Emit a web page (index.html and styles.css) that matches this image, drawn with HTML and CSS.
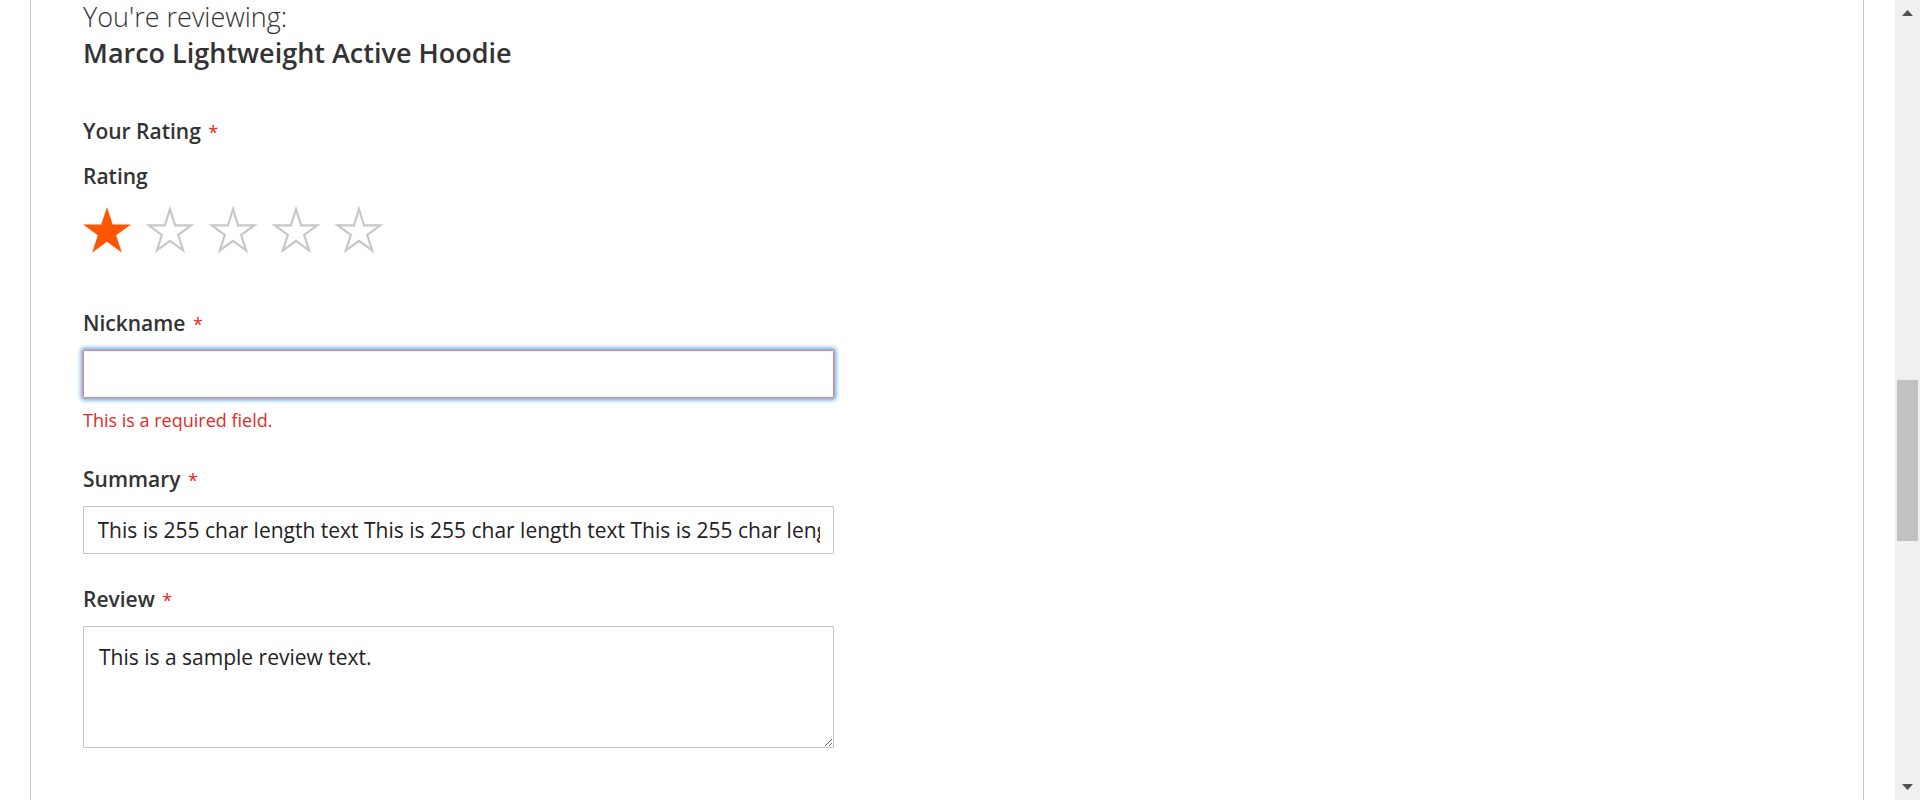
FILE: index.html
```html
<!DOCTYPE html>
<html lang="en">
<head>
<meta charset="utf-8">
<title>Review form</title>
<link rel="stylesheet" href="styles.css">
</head>
<body>
<div class="viewport">
  <main class="page">
    <div class="frame">
      <form class="review-form">
        <div class="legend">
          <span class="legend-intro">You're reviewing:</span>
          <strong class="legend-product">Marco Lightweight Active Hoodie</strong>
        </div>

        <div class="field field-rating">
          <div class="label required">Your Rating</div>
          <div class="label rating-label">Rating</div>
          <div class="stars">
            <svg class="star" viewBox="0 0 48 46" width="48" height="46"><polygon class="star-on" points="24,0 29.66,17.41 47.97,17.41 33.16,28.18 38.81,45.59 24,34.83 9.19,45.59 14.84,28.18 0.03,17.41 18.34,17.41"/></svg>
            <svg class="star" viewBox="0 0 48 46" width="48" height="46"><polygon class="star-off" points="24,2.2 29.1,18.4 45.2,18.4 32.2,27.9 37.1,43.4 24,33.8 10.9,43.4 15.8,27.9 2.8,18.4 18.9,18.4"/></svg>
            <svg class="star" viewBox="0 0 48 46" width="48" height="46"><polygon class="star-off" points="24,2.2 29.1,18.4 45.2,18.4 32.2,27.9 37.1,43.4 24,33.8 10.9,43.4 15.8,27.9 2.8,18.4 18.9,18.4"/></svg>
            <svg class="star" viewBox="0 0 48 46" width="48" height="46"><polygon class="star-off" points="24,2.2 29.1,18.4 45.2,18.4 32.2,27.9 37.1,43.4 24,33.8 10.9,43.4 15.8,27.9 2.8,18.4 18.9,18.4"/></svg>
            <svg class="star" viewBox="0 0 48 46" width="48" height="46"><polygon class="star-off" points="24,2.2 29.1,18.4 45.2,18.4 32.2,27.9 37.1,43.4 24,33.8 10.9,43.4 15.8,27.9 2.8,18.4 18.9,18.4"/></svg>
          </div>
        </div>

        <div class="field field-nickname">
          <label class="label required" for="nickname">Nickname</label>
          <input class="input input-error" id="nickname" type="text" value="">
          <div class="error-msg">This is a required field.</div>
        </div>

        <div class="field field-summary">
          <label class="label required" for="summary">Summary</label>
          <input class="input" id="summary" type="text" value="This is 255 char length text This is 255 char length text This is 255 char length text This is 255 char length text This is 255 char length text This is 255 char length text This is 255 char length text This is 255 char length text This is 255 ch">
        </div>

        <div class="field field-review">
          <label class="label required" for="review">Review</label>
          <textarea class="textarea" id="review">This is a sample review text.</textarea>
        </div>
      </form>
    </div>
  </main>
  <div class="scrollbar">
    <div class="sb-btn sb-up"><svg width="11" height="6" viewBox="0 0 11 6"><polygon points="0,6 5.5,0 11,6" fill="#505050"/></svg></div>
    <div class="sb-track"><div class="sb-thumb"></div></div>
    <div class="sb-btn sb-down"><svg width="11" height="6" viewBox="0 0 11 6"><polygon points="0,0 5.5,6 11,0" fill="#505050"/></svg></div>
  </div>
</div>
</body>
</html>
```

FILE: styles.css
```css
html, body {
  margin: 0;
  padding: 0;
  background: #fff;
}

body {
  font-family: "Open Sans", "Liberation Sans", sans-serif;
  color: #333;
}

.viewport {
  display: flex;
  height: 800px;
  overflow: hidden;
}

.page {
  flex: 1;
  min-width: 0;
  padding-left: 30px;
  padding-right: 31px;
}

.frame {
  height: 100%;
  border-left: 1px solid #c8c8c8;
  border-right: 1px solid #c8c8c8;
  padding-left: 52px;
}

.review-form {
  display: flex;
  flex-direction: column;
  padding-top: 1px;
}

.legend {
  display: flex;
  flex-direction: column;
  font-size: 27px;
  line-height: 32px;
  color: #333;
}

.legend-intro {
  font-weight: 300;
  margin-bottom: 4px;
}

.legend-product {
  font-weight: 600;
}

.field {
  display: flex;
  flex-direction: column;
  align-items: flex-start;
}

.label {
  display: block;
  font-size: 21px;
  line-height: 30px;
  font-weight: 600;
  color: #333;
  margin-bottom: 11.3px;
}

.label.required::after {
  content: "*";
  color: #e02b27;
  font-size: 18px;
  margin-left: 7.5px;
  font-weight: 400;
}

.field-rating {
  margin-top: 46.8px;
}

.field-rating .required {
  margin-bottom: 14.5px;
}

.rating-label {
  margin-bottom: 15.3px;
}

.stars {
  display: flex;
  gap: 15px;
}

.star {
  display: block;
  overflow: visible;
}

.star-on {
  fill: #ff5501;
}

.star-off {
  fill: none;
  stroke: #c7c7c7;
  stroke-width: 2.2;
  stroke-linejoin: miter;
}

.field-nickname {
  margin-top: 55.5px;
}

.field-nickname .label {
  margin-bottom: 10.7px;
}

.field-summary {
  margin-top: 30.4px;
}

.field-review {
  margin-top: 29.8px;
}

.input {
  display: block;
  box-sizing: border-box;
  width: 751px;
  height: 48px;
  margin: 0;
  padding: 0 13.5px;
  border: 1px solid #c2c2c2;
  border-radius: 1px;
  font-family: "Open Sans", "Liberation Sans", sans-serif;
  font-size: 21px;
  color: #222;
  background: #fff;
  outline: none;
}

.input-error {
  border-color: #ed8380;
  box-shadow: 0 0 4px 2px #62a0d6;
}

.error-msg {
  margin-top: 10px;
  font-size: 18px;
  line-height: 25.7px;
  color: #e02b27;
}

.textarea {
  display: block;
  box-sizing: border-box;
  width: 751px;
  height: 121.5px;
  margin: 0;
  padding: 15px 15px;
  border: 1px solid #c2c2c2;
  border-radius: 1px;
  font-family: "Open Sans", "Liberation Sans", sans-serif;
  font-size: 21px;
  line-height: 30px;
  color: #222;
  background: #fff;
  resize: vertical;
  outline: none;
}

.scrollbar {
  width: 25px;
  flex: none;
  background: #f0f0f0;
  display: flex;
  flex-direction: column;
}

.sb-btn {
  height: 25px;
  display: flex;
  justify-content: center;
}

.sb-up {
  align-items: flex-start;
  padding-top: 10px;
  box-sizing: border-box;
}

.sb-down {
  align-items: flex-end;
  padding-bottom: 10px;
  box-sizing: border-box;
}

.sb-btn svg {
  display: block;
}

.sb-track {
  flex: 1;
  padding-top: 355px;
}

.sb-thumb {
  height: 161px;
  margin: 0 2px;
  background: #c1c1c1;
}
```
